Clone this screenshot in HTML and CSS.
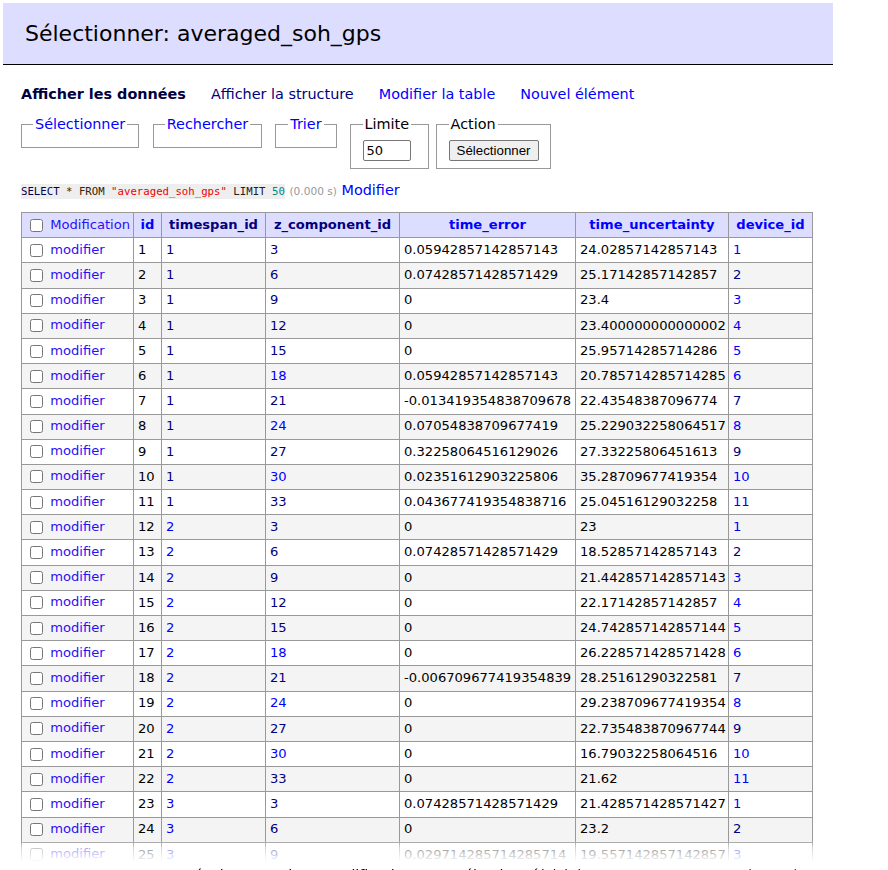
FILE: index.html
```html
<!DOCTYPE html>
<html lang="fr">
<head>
<meta charset="utf-8">
<title>Sélectionner: averaged_soh_gps</title>
<link rel="stylesheet" href="styles.css">
</head>
<body>
<div class="page">
  <h2 class="title">Sélectionner: averaged_soh_gps</h2>
  <div class="content">
    <p class="links">
      <a class="active" href="#">Afficher les données</a>
      <a class="visited" href="#">Afficher la structure</a>
      <a href="#">Modifier la table</a>
      <a href="#">Nouvel élément</a>
    </p>
    <form class="filters">
      <fieldset class="fs fs-sel"><legend><a href="#">Sélectionner</a></legend></fieldset>
      <fieldset class="fs fs-search"><legend><a href="#">Rechercher</a></legend></fieldset>
      <fieldset class="fs fs-sort"><legend><a href="#">Trier</a></legend></fieldset>
      <fieldset class="fs fs-limit"><legend>Limite</legend><input class="limit" type="text" value="50"></fieldset>
      <fieldset class="fs fs-action"><legend>Action</legend><button class="btn" type="button">Sélectionner</button></fieldset>
    </form>
    <p class="sql"><code class="code"><span class="kw">SELECT</span> <span class="op">* FROM</span> <span class="str">"averaged_soh_gps"</span> <span class="kw2">LIMIT</span> <span class="num">50</span></code> <span class="time">(0.000 s)</span> <a href="#">Modifier</a></p>
    <table class="grid">
      <colgroup>
        <col class="c0"><col class="c1"><col class="c2"><col class="c3"><col class="c4"><col class="c5"><col class="c6">
      </colgroup>
      <thead>
        <tr>
          <td class="chk"><input type="checkbox"> <a class="edit" href="#">Modification</a></td>
          <th><a href="#">id</a></th>
          <th><a class="visited" href="#">timespan_id</a></th>
          <th><a class="visited" href="#">z_component_id</a></th>
          <th><a href="#">time_error</a></th>
          <th><a href="#">time_uncertainty</a></th>
          <th><a href="#">device_id</a></th>
        </tr>
      </thead>
      <tbody>
        <tr><td class="chk"><input type="checkbox"> <a class="edit" href="#">modifier</a></td><td>1</td><td><a class="visited" href="#">1</a></td><td><a class="visited" href="#">3</a></td><td>0.05942857142857143</td><td>24.02857142857143</td><td><a href="#">1</a></td></tr>
        <tr><td class="chk"><input type="checkbox"> <a class="edit" href="#">modifier</a></td><td>2</td><td><a class="visited" href="#">1</a></td><td><a class="visited" href="#">6</a></td><td>0.07428571428571429</td><td>25.17142857142857</td><td><a class="visited" href="#">2</a></td></tr>
        <tr><td class="chk"><input type="checkbox"> <a class="edit" href="#">modifier</a></td><td>3</td><td><a class="visited" href="#">1</a></td><td><a class="visited" href="#">9</a></td><td>0</td><td>23.4</td><td><a href="#">3</a></td></tr>
        <tr><td class="chk"><input type="checkbox"> <a class="edit" href="#">modifier</a></td><td>4</td><td><a class="visited" href="#">1</a></td><td><a class="visited" href="#">12</a></td><td>0</td><td>23.400000000000002</td><td><a href="#">4</a></td></tr>
        <tr><td class="chk"><input type="checkbox"> <a class="edit" href="#">modifier</a></td><td>5</td><td><a class="visited" href="#">1</a></td><td><a class="visited" href="#">15</a></td><td>0</td><td>25.95714285714286</td><td><a href="#">5</a></td></tr>
        <tr><td class="chk"><input type="checkbox"> <a class="edit" href="#">modifier</a></td><td>6</td><td><a class="visited" href="#">1</a></td><td><a href="#">18</a></td><td>0.05942857142857143</td><td>20.785714285714285</td><td><a href="#">6</a></td></tr>
        <tr><td class="chk"><input type="checkbox"> <a class="edit" href="#">modifier</a></td><td>7</td><td><a class="visited" href="#">1</a></td><td><a class="visited" href="#">21</a></td><td>-0.013419354838709678</td><td>22.43548387096774</td><td><a class="visited" href="#">7</a></td></tr>
        <tr><td class="chk"><input type="checkbox"> <a class="edit" href="#">modifier</a></td><td>8</td><td><a class="visited" href="#">1</a></td><td><a href="#">24</a></td><td>0.07054838709677419</td><td>25.229032258064517</td><td><a href="#">8</a></td></tr>
        <tr><td class="chk"><input type="checkbox"> <a class="edit" href="#">modifier</a></td><td>9</td><td><a class="visited" href="#">1</a></td><td><a class="visited" href="#">27</a></td><td>0.32258064516129026</td><td>27.33225806451613</td><td><a class="visited" href="#">9</a></td></tr>
        <tr><td class="chk"><input type="checkbox"> <a class="edit" href="#">modifier</a></td><td>10</td><td><a class="visited" href="#">1</a></td><td><a href="#">30</a></td><td>0.02351612903225806</td><td>35.28709677419354</td><td><a href="#">10</a></td></tr>
        <tr><td class="chk"><input type="checkbox"> <a class="edit" href="#">modifier</a></td><td>11</td><td><a class="visited" href="#">1</a></td><td><a class="visited" href="#">33</a></td><td>0.043677419354838716</td><td>25.04516129032258</td><td><a href="#">11</a></td></tr>
        <tr><td class="chk"><input type="checkbox"> <a class="edit" href="#">modifier</a></td><td>12</td><td><a href="#">2</a></td><td><a class="visited" href="#">3</a></td><td>0</td><td>23</td><td><a href="#">1</a></td></tr>
        <tr><td class="chk"><input type="checkbox"> <a class="edit" href="#">modifier</a></td><td>13</td><td><a href="#">2</a></td><td><a class="visited" href="#">6</a></td><td>0.07428571428571429</td><td>18.52857142857143</td><td><a class="visited" href="#">2</a></td></tr>
        <tr><td class="chk"><input type="checkbox"> <a class="edit" href="#">modifier</a></td><td>14</td><td><a href="#">2</a></td><td><a class="visited" href="#">9</a></td><td>0</td><td>21.442857142857143</td><td><a href="#">3</a></td></tr>
        <tr><td class="chk"><input type="checkbox"> <a class="edit" href="#">modifier</a></td><td>15</td><td><a href="#">2</a></td><td><a class="visited" href="#">12</a></td><td>0</td><td>22.17142857142857</td><td><a href="#">4</a></td></tr>
        <tr><td class="chk"><input type="checkbox"> <a class="edit" href="#">modifier</a></td><td>16</td><td><a href="#">2</a></td><td><a class="visited" href="#">15</a></td><td>0</td><td>24.742857142857144</td><td><a href="#">5</a></td></tr>
        <tr><td class="chk"><input type="checkbox"> <a class="edit" href="#">modifier</a></td><td>17</td><td><a href="#">2</a></td><td><a href="#">18</a></td><td>0</td><td>26.228571428571428</td><td><a href="#">6</a></td></tr>
        <tr><td class="chk"><input type="checkbox"> <a class="edit" href="#">modifier</a></td><td>18</td><td><a href="#">2</a></td><td><a class="visited" href="#">21</a></td><td>-0.006709677419354839</td><td>28.25161290322581</td><td><a class="visited" href="#">7</a></td></tr>
        <tr><td class="chk"><input type="checkbox"> <a class="edit" href="#">modifier</a></td><td>19</td><td><a href="#">2</a></td><td><a href="#">24</a></td><td>0</td><td>29.238709677419354</td><td><a href="#">8</a></td></tr>
        <tr><td class="chk"><input type="checkbox"> <a class="edit" href="#">modifier</a></td><td>20</td><td><a href="#">2</a></td><td><a class="visited" href="#">27</a></td><td>0</td><td>22.735483870967744</td><td><a class="visited" href="#">9</a></td></tr>
        <tr><td class="chk"><input type="checkbox"> <a class="edit" href="#">modifier</a></td><td>21</td><td><a href="#">2</a></td><td><a href="#">30</a></td><td>0</td><td>16.79032258064516</td><td><a href="#">10</a></td></tr>
        <tr><td class="chk"><input type="checkbox"> <a class="edit" href="#">modifier</a></td><td>22</td><td><a href="#">2</a></td><td><a class="visited" href="#">33</a></td><td>0</td><td>21.62</td><td><a href="#">11</a></td></tr>
        <tr><td class="chk"><input type="checkbox"> <a class="edit" href="#">modifier</a></td><td>23</td><td><a href="#">3</a></td><td><a class="visited" href="#">3</a></td><td>0.07428571428571429</td><td>21.428571428571427</td><td><a href="#">1</a></td></tr>
        <tr><td class="chk"><input type="checkbox"> <a class="edit" href="#">modifier</a></td><td>24</td><td><a href="#">3</a></td><td><a class="visited" href="#">6</a></td><td>0</td><td>23.2</td><td><a class="visited" href="#">2</a></td></tr>
        <tr><td class="chk"><input type="checkbox"> <a class="edit" href="#">modifier</a></td><td>25</td><td><a href="#">3</a></td><td><a class="visited" href="#">9</a></td><td>0.029714285714285714</td><td>19.557142857142857</td><td><a href="#">3</a></td></tr>
      </tbody>
    </table>
  </div>
</div>
<div class="footer">
  <span class="f1">Page</span>
  <span class="f2">Résultat complet</span>
  <span class="f3">Modification</span>
  <span class="f4">Sélectionné(s) (0)</span>
  <a class="f5" href="#">Exporter (5 000)</a>
</div>
</body>
</html>
```
FILE: styles.css
```css
html, body {
  margin: 0;
  padding: 0;
  background: #fff;
}
body {
  font-family: "DejaVu Sans", Verdana, sans-serif;
  font-size: 14.4px;
  line-height: 1.25;
  color: #000;
}
a {
  color: #00f;
  text-decoration: none;
}
a.visited {
  color: #000080;
}
a.edit {
  color: #2a10f5;
}
.page {
  width: 830px;
  margin: 3px 0 0 3px;
}
.title {
  margin: 0 0 20px 0;
  padding: 17px 22px 17px 22px;
  font-size: 22px;
  line-height: 27px;
  font-weight: normal;
  background: #ddf;
  border-bottom: 1px solid #000;
  color: #000;
}
.content {
  padding-left: 18px;
}
.links {
  margin: 0;
  display: flex;
  gap: 25px;
}
.links a.active {
  font-weight: bold;
  color: #000040;
}
.filters {
  display: flex;
  align-items: flex-start;
  margin: 12px 0 0 0;
}
.fs {
  margin: 0;
  padding: 7px 11px 7px 11px;
  border: 1px solid #999;
  min-width: 0;
}
.fs-sel { margin-right: 13.5px; }
.fs-search { margin-right: 13px; }
.fs-sort { margin-right: 12.5px; padding-left: 12px; padding-right: 12.5px; }
.fs-limit { margin-right: 6.5px; padding-left: 12px; padding-right: 17px; }
.fs-action { padding-left: 12px; padding-right: 11px; }
.fs legend {
  padding: 0 2px;
}
.limit {
  width: 48px;
  height: 21px;
  box-sizing: border-box;
  margin: 0;
  padding: 1px 3px;
  font-family: "DejaVu Sans", sans-serif;
  font-size: 13px;
  border: 1px solid #767676;
  border-radius: 2px;
}
.btn {
  height: 21px;
  margin: 0;
  padding: 0 7px;
  font-family: "Liberation Sans", Arial, sans-serif;
  font-size: 13.3px;
  background: #efefef;
  border: 1px solid #767676;
  border-radius: 2px;
  color: #000;
}
.sql {
  margin: 12px 0 0 0;
}
.code {
  font-family: "DejaVu Sans Mono", monospace;
  font-size: 10.7px;
  background: #eee;
  padding: 1px 0;
}
.kw { color: #000050; }
.op { color: #332200; }
.kw2 { color: #202020; }
.str { color: #e00; }
.num { color: #088; }
.time {
  font-size: 10.6px;
  color: #999;
}
.grid {
  margin-top: 13px;
  border-collapse: collapse;
  table-layout: fixed;
  width: 792px;
  font-size: 13.1px;
  line-height: 1.25;
}
.c0 { width: 112px; }
.c1 { width: 28px; }
.c2 { width: 104px; }
.c3 { width: 134px; }
.c4 { width: 176px; }
.c5 { width: 153px; }
.c6 { width: 84px; }
.grid td, .grid th {
  border: 1px solid #999;
  padding: 2.6px 4px;
  white-space: nowrap;
  overflow: hidden;
  text-align: left;
  vertical-align: middle;
}
.grid thead th, .grid thead td {
  background: #ddf;
}
.grid thead th {
  text-align: center;
  font-weight: bold;
}
.grid tbody tr:nth-child(2n) {
  background: #f4f4f4;
}
.grid input[type=checkbox] {
  margin: 3px 3px 3px 4px;
  vertical-align: middle;
}
.footer {
  position: fixed;
  left: 0;
  right: 0;
  bottom: 0;
  height: 30px;
  background: linear-gradient(to bottom, rgba(255,255,255,0) 0px, rgba(255,255,255,0.6) 8px, #fff 22px);
  font-size: 14.4px;
}
.footer span, .footer a {
  position: absolute;
  top: 26px;
  color: #000;
}
.footer a { color: #00f; }
.f1 { left: 36px; }
.f2 { left: 185px; }
.f3 { left: 325px; }
.f4 { left: 455px; }
.f5 { left: 680px; }
```
